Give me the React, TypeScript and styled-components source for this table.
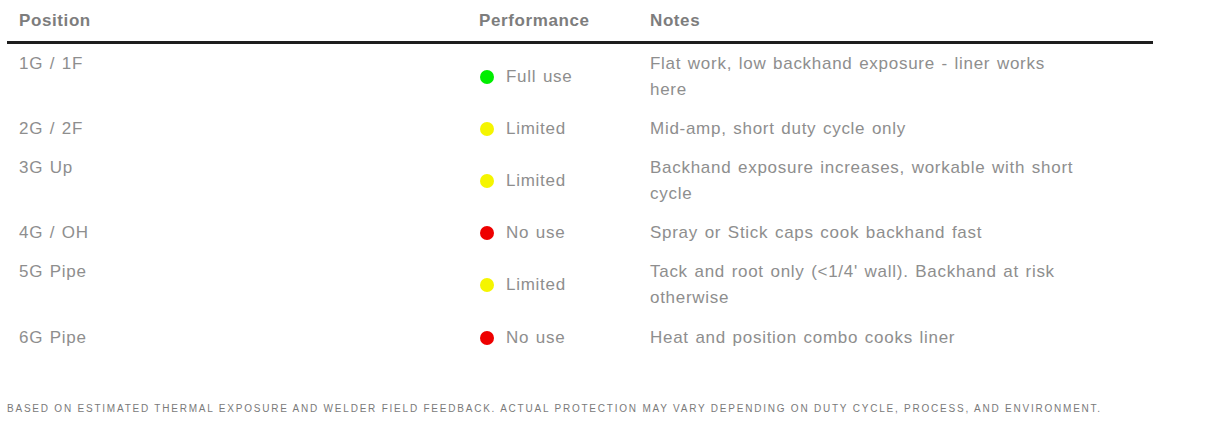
import styled, { createGlobalStyle } from 'styled-components'

const GlobalStyles = createGlobalStyle`
  html, body {
    margin: 0;
    padding: 0;
    background: #ffffff;
  }
  body {
    font-family: "Liberation Sans", Arial, sans-serif;
  }
`

type Level = 'full' | 'limited' | 'none'

interface Row {
    position: string;
    level: Level;
    label: string;
    note: string;
}

const rows: Row[] = [
    { position: '1G / 1F', level: 'full', label: 'Full use', note: 'Flat work, low backhand exposure - liner works here' },
    { position: '2G / 2F', level: 'limited', label: 'Limited', note: 'Mid-amp, short duty cycle only' },
    { position: '3G Up', level: 'limited', label: 'Limited', note: 'Backhand exposure increases, workable with short cycle' },
    { position: '4G / OH', level: 'none', label: 'No use', note: 'Spray or Stick caps cook backhand fast' },
    { position: '5G Pipe', level: 'limited', label: 'Limited', note: "Tack and root only (<1/4' wall). Backhand at risk otherwise" },
    { position: '6G Pipe', level: 'none', label: 'No use', note: 'Heat and position combo cooks liner' },
]

const dotColors: Record<Level, string> = {
    full: '#00ee00',
    limited: '#f5f500',
    none: '#ee0000',
}

const Wrapper = styled.div`
  padding: 0 0 0 7px;
`

const Table = styled.table`
  width: 1146px;
  border-collapse: collapse;
  table-layout: fixed;
`

const HeadCell = styled.th<{ $width: number }>`
  box-sizing: border-box;
  width: ${p => p.$width}px;
  padding: 10px 12px 9px;
  text-align: left;
  font-size: 17px;
  line-height: 22px;
  font-weight: 700;
  color: #7d7d7d;
  letter-spacing: 0.6px;
  border-bottom: 3px solid #1e1e1e;
`

const Cell = styled.td<{ $middle?: boolean }>`
  box-sizing: border-box;
  padding: 6.6px 12px;
  vertical-align: ${p => (p.$middle ? 'middle' : 'top')};
  font-size: 17px;
  line-height: 26px;
  color: #8e8e8e;
  letter-spacing: 0.72px;
  word-spacing: 1.2px;
`

const Status = styled.div`
  display: flex;
  align-items: center;
  gap: 12px;
  padding-left: 1px;
`

const Dot = styled.span<{ $level: Level }>`
  width: 14px;
  height: 14px;
  border-radius: 50%;
  background: ${p => dotColors[p.$level]};
  flex: none;
`

const Note = styled.div`
  max-width: 434px;
`

const Footnote = styled.p`
  margin: 45px 0 0;
  font-size: 10px;
  line-height: 14px;
  text-transform: uppercase;
  letter-spacing: 1.78px;
  color: #7a7a7a;
`

export default function App() {
    return (
        <Wrapper>
            <GlobalStyles />
            <Table>
                <thead>
                    <tr>
                        <HeadCell $width={460}>Position</HeadCell>
                        <HeadCell $width={171}>Performance</HeadCell>
                        <HeadCell $width={515}>Notes</HeadCell>
                    </tr>
                </thead>
                <tbody>
                    {rows.map(row => (
                        <tr key={row.position}>
                            <Cell>{row.position}</Cell>
                            <Cell $middle>
                                <Status>
                                    <Dot $level={row.level} />
                                    {row.label}
                                </Status>
                            </Cell>
                            <Cell>
                                <Note>{row.note}</Note>
                            </Cell>
                        </tr>
                    ))}
                </tbody>
            </Table>
            <Footnote>
                Based on estimated thermal exposure and welder field feedback. Actual protection may vary depending on duty cycle, process, and environment.
            </Footnote>
        </Wrapper>
    )
}
